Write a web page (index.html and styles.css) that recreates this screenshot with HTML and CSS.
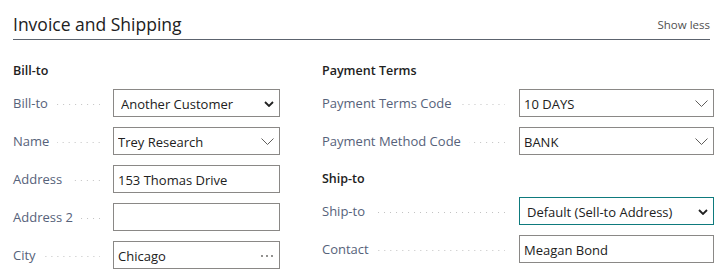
FILE: index.html
```html
<!DOCTYPE html>
<html lang="en">
<head>
    <meta charset="UTF-8">
    <meta name="viewport" content="width=device-width, initial-scale=1.0">
    <title>Invoice and Shipping</title>
    <link rel="stylesheet" href="styles.css">
</head>
<body>
    <div class="fasttab">
        <!-- Tab header -->
        <div class="tab-header">
            <h2 class="tab-title">Invoice and Shipping</h2>
            <a class="show-less" href="#">Show less</a>
        </div>
        <div class="tab-body">
            <!-- Bill-to -->
            <div class="column column-left">
                <div class="group">
                    <h3 class="group-title">Bill-to</h3>
                    <div class="field">
                        <div class="field-label">Bill-to<span class="leader"></span></div>
                        <div class="control control-select">
                            <span class="control-value">Another Customer</span>
                            <svg class="chevron-bold" width="10" height="6" viewBox="0 0 10 6"><path d="M1 1l4 4 4-4" fill="none" stroke="#212121" stroke-width="1.8"/></svg>
                        </div>
                    </div>
                    <div class="field">
                        <div class="field-label">Name<span class="leader"></span></div>
                        <div class="control">
                            <span class="control-value">Trey Research</span>
                            <svg class="chevron-thin" width="13" height="7" viewBox="0 0 13 7"><path d="M0.5 0.5l6 6 6-6" fill="none" stroke="#605e5c" stroke-width="1"/></svg>
                        </div>
                    </div>
                    <div class="field">
                        <div class="field-label">Address<span class="leader"></span></div>
                        <div class="control">
                            <span class="control-value">153 Thomas Drive</span>
                        </div>
                    </div>
                    <div class="field">
                        <div class="field-label">Address 2<span class="leader"></span></div>
                        <div class="control">
                            <span class="control-value"></span>
                        </div>
                    </div>
                    <div class="field">
                        <div class="field-label">City<span class="leader"></span></div>
                        <div class="control">
                            <span class="control-value">Chicago</span>
                            <svg class="ellipsis" width="14" height="4" viewBox="0 0 14 4"><circle cx="2" cy="2" r="0.9" fill="#605e5c"/><circle cx="7" cy="2" r="0.9" fill="#605e5c"/><circle cx="12" cy="2" r="0.9" fill="#605e5c"/></svg>
                        </div>
                    </div>
                </div>
            </div>
            <!-- Payment + Ship-to -->
            <div class="column column-right">
                <div class="group">
                    <h3 class="group-title">Payment Terms</h3>
                    <div class="field">
                        <div class="field-label">Payment Terms Code<span class="leader"></span></div>
                        <div class="control">
                            <span class="control-value">10 DAYS</span>
                            <svg class="chevron-thin" width="13" height="7" viewBox="0 0 13 7"><path d="M0.5 0.5l6 6 6-6" fill="none" stroke="#605e5c" stroke-width="1"/></svg>
                        </div>
                    </div>
                    <div class="field">
                        <div class="field-label">Payment Method Code<span class="leader"></span></div>
                        <div class="control">
                            <span class="control-value">BANK</span>
                            <svg class="chevron-thin" width="13" height="7" viewBox="0 0 13 7"><path d="M0.5 0.5l6 6 6-6" fill="none" stroke="#605e5c" stroke-width="1"/></svg>
                        </div>
                    </div>
                </div>
                <div class="group group-next">
                    <h3 class="group-title">Ship-to</h3>
                    <div class="field">
                        <div class="field-label">Ship-to<span class="leader"></span></div>
                        <div class="control control-select control-focus">
                            <span class="control-value">Default (Sell-to Address)</span>
                            <svg class="chevron-bold" width="10" height="6" viewBox="0 0 10 6"><path d="M1 1l4 4 4-4" fill="none" stroke="#212121" stroke-width="1.8"/></svg>
                        </div>
                    </div>
                    <div class="field">
                        <div class="field-label">Contact<span class="leader"></span></div>
                        <div class="control">
                            <span class="control-value">Meagan Bond</span>
                        </div>
                    </div>
                </div>
            </div>
        </div>
    </div>
</body>
</html>
```

FILE: styles.css
```css
body {
    margin: 0;
    padding: 0;
    font-family: "Segoe UI", "Open Sans", sans-serif;
    background: #FFFFFF;
    color: #212121;
}
.fasttab {
    padding: 0 8px 0 13px;
}
.tab-header {
    display: flex;
    justify-content: space-between;
    align-items: flex-end;
    height: 39px;
    margin-right: 4px;
    border-bottom: 1px solid #5c636e;
}
.tab-title {
    margin: 0 0 3px;
    font-size: 17.5px;
    font-weight: 400;
    line-height: 24px;
    color: #212121;
}
.show-less {
    margin-bottom: 6px;
    font-size: 11.5px;
    line-height: 16px;
    color: #505050;
    text-decoration: none;
}
.tab-body {
    display: grid;
    grid-template-columns: 267px 392px;
    column-gap: 42px;
    padding-top: 21px;
}
.group-title {
    margin: 0 0 8px;
    font-size: 12.5px;
    font-weight: 600;
    line-height: 20px;
}
.group-next {
    margin-top: 14px;
}
.field {
    display: flex;
    align-items: center;
    height: 28px;
    margin-bottom: 10px;
}
.field-label {
    display: flex;
    align-items: center;
    width: 100px;
    padding-right: 13px;
    font-size: 13px;
    color: #56627a;
    white-space: nowrap;
}
.column-right .field-label {
    width: 197px;
    padding-right: 14px;
}
.leader {
    flex: 1;
    height: 1px;
    margin: 3px 0 0 8px;
    background-image: linear-gradient(to left, #c2c2c2 1px, transparent 1px);
    background-size: 6px 1px;
    background-position: right center;
    background-repeat: repeat-x;
}
.control {
    display: flex;
    align-items: center;
    width: 167px;
    height: 28px;
    padding: 1px 5px 0 4px;
    border: 1px solid #8a8886;
    font-size: 13px;
    color: #212121;
}
.column-right .control {
    width: 195px;
}
.control-select {
    padding-left: 7px;
}
.control-focus {
    border-color: #0e7a7d;
}
.control-value {
    flex: 1;
    white-space: nowrap;
    overflow: hidden;
}
.field-label, .control {
    box-sizing: border-box;
}
```
